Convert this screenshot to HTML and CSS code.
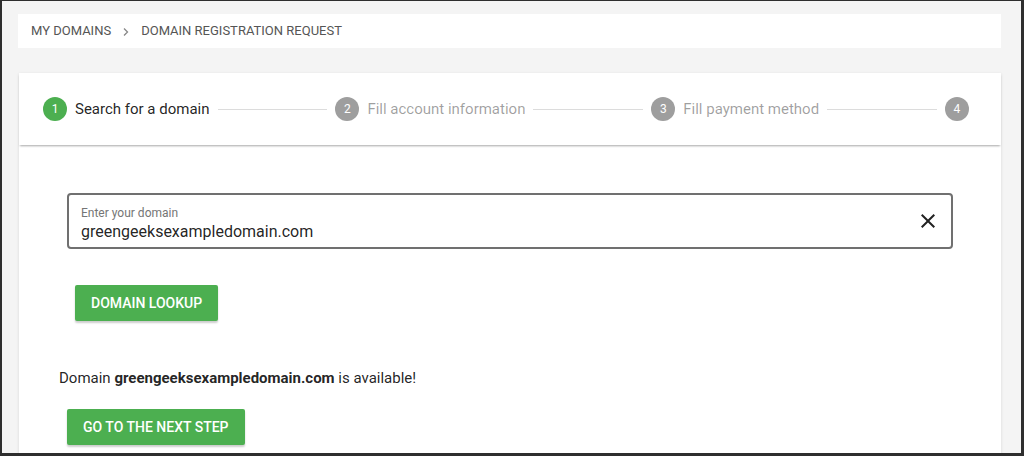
FILE: index.html
```html
<!DOCTYPE html>
<html lang="en">
<head>
    <meta charset="UTF-8">
    <meta name="viewport" content="width=device-width, initial-scale=1.0">
    <title>Domain Registration Request</title>
    <link rel="stylesheet" href="styles.css">
</head>
<body>
    <div class="frame">
        <div class="breadcrumbs">
            <span>My Domains</span>
            <svg class="chevron" width="8" height="10" viewBox="0 0 8 10"><path d="M2 1.5L5.5 5 2 8.5" fill="none" stroke="#888" stroke-width="1.3"/></svg>
            <span>Domain Registration Request</span>
        </div>

        <div class="card">
            <div class="stepper">
                <div class="step active">
                    <span class="step-num">1</span>
                    <span class="step-label">Search for a domain</span>
                </div>
                <div class="step-line"></div>
                <div class="step">
                    <span class="step-num">2</span>
                    <span class="step-label">Fill account information</span>
                </div>
                <div class="step-line"></div>
                <div class="step">
                    <span class="step-num">3</span>
                    <span class="step-label">Fill payment method</span>
                </div>
                <div class="step-line"></div>
                <div class="step">
                    <span class="step-num">4</span>
                </div>
            </div>

            <div class="content">
                <div class="field">
                    <div class="field-text">
                        <label for="domain">Enter your domain</label>
                        <input type="text" id="domain" value="greengeeksexampledomain.com">
                    </div>
                    <button type="button" class="clear-btn" aria-label="Clear">
                        <svg width="24" height="24" viewBox="0 0 24 24"><path d="M19 6.41L17.59 5 12 10.59 6.41 5 5 6.41 10.59 12 5 17.59 6.41 19 12 13.41 17.59 19 19 17.59 13.41 12z" fill="#222"/></svg>
                    </button>
                </div>

                <button type="button" class="btn lookup-btn">Domain Lookup</button>

                <p class="result">Domain <b>greengeeksexampledomain.com</b> is available!</p>

                <button type="button" class="btn next-btn">Go to the next step</button>
            </div>
        </div>
    </div>
</body>
</html>
```

FILE: styles.css
```css
* {
    box-sizing: border-box;
}

body {
    margin: 0;
    font-family: Roboto, "Liberation Sans", Arial, sans-serif;
    background: #f4f4f4;
}

.frame {
    height: 456px;
    overflow: hidden;
    border: 2px solid #2e2e2e;
    border-top-width: 1px;
    border-right-width: 3px;
    border-bottom-width: 3px;
    padding: 13px 20px 0 16px;
    background: #f4f4f4;
}

.breadcrumbs {
    display: flex;
    align-items: center;
    gap: 11px;
    height: 34px;
    padding: 0 13px 1px;
    background: #fff;
    font-size: 13px;
    text-transform: uppercase;
    color: #555;
}

.chevron {
    margin-top: 2px;
}

.card {
    margin-top: 25px;
    margin-left: 1px;
    background: #fff;
    box-shadow: 0 1px 3px rgba(0, 0, 0, 0.12);
    height: 400px;
}

.stepper {
    display: flex;
    align-items: center;
    height: 72px;
    padding: 0 32px 0 24px;
    box-shadow: 0 2px 2px -1px rgba(0, 0, 0, 0.35);
    position: relative;
}

.step {
    display: flex;
    align-items: center;
    gap: 8px;
}

.step-num {
    width: 24px;
    height: 24px;
    border-radius: 50%;
    background: #9e9e9e;
    color: #fff;
    font-size: 12px;
    display: flex;
    align-items: center;
    justify-content: center;
}

.step-label {
    font-size: 15px;
    color: rgba(0, 0, 0, 0.38);
}

.step.active .step-num {
    background: #4caf50;
}

.step.active .step-label {
    color: rgba(0, 0, 0, 0.87);
}

.step-line {
    flex: 1;
    height: 1px;
    margin: 0 8px;
    background: #dcdcdc;
}

.content {
    padding: 48px 48px 0 40px;
}

.field {
    display: flex;
    align-items: center;
    height: 56px;
    margin-left: 8px;
    border: 2px solid #707070;
    border-radius: 4px;
    padding: 0 11px 0 12px;
}

.field-text {
    flex: 1;
    display: flex;
    flex-direction: column;
    padding-top: 5px;
}

.field label {
    font-size: 12px;
    color: #757575;
    line-height: 14px;
}

.field input {
    border: none;
    outline: none;
    padding: 0;
    margin: 2px 0 0;
    font-family: inherit;
    font-size: 16px;
    color: rgba(0, 0, 0, 0.87);
    background: none;
}

.clear-btn {
    border: none;
    background: none;
    padding: 0;
    width: 24px;
    height: 24px;
    cursor: pointer;
}

.btn {
    display: block;
    height: 36px;
    padding: 0 16px;
    border: none;
    border-radius: 2px;
    background: #4caf50;
    color: #fff;
    font-family: inherit;
    font-size: 14px;
    font-weight: 500;
    text-transform: uppercase;
    box-shadow: 0 2px 2px rgba(0, 0, 0, 0.2);
    cursor: pointer;
}

.lookup-btn {
    margin: 36px 0 0 16px;
}

.result {
    margin: 47px 0 0;
    font-size: 15px;
    line-height: 20px;
    color: rgba(0, 0, 0, 0.87);
}

.next-btn {
    margin: 21px 0 0 8px;
}
```
